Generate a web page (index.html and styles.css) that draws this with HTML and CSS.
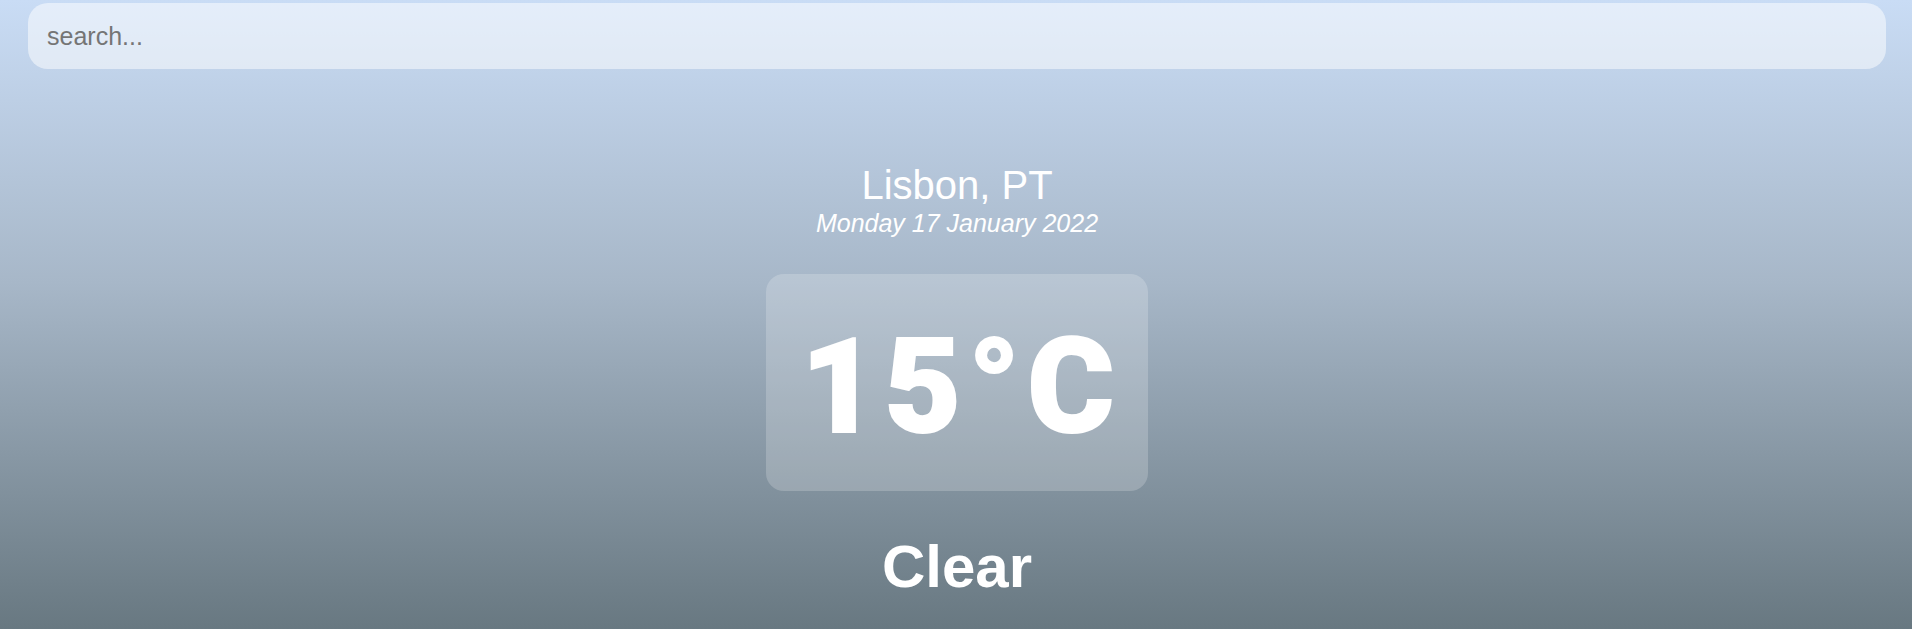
FILE: index.html
```html
<!DOCTYPE html>
<html lang="en">
<head>
<meta charset="utf-8">
<title>Weather</title>
<link rel="stylesheet" href="styles.css">
</head>
<body>
<main class="app">
  <div class="search-box">
    <input class="search-bar" type="text" placeholder="search...">
  </div>
  <section class="location-box">
    <div class="location">Lisbon, PT</div>
    <div class="date">Monday 17 January 2022</div>
  </section>
  <section class="weather-box">
    <div class="temp">15°C</div>
    <div class="weather">Clear</div>
  </section>
</main>
</body>
</html>
```
FILE: styles.css
```css
* { box-sizing: border-box; }
html, body { margin: 0; padding: 0; height: 100%; }
body {
  font-family: "Liberation Sans", Arial, sans-serif;
  background: linear-gradient(to bottom, #c9dcf5 0%, #a7b7c8 45%, #687881 100%);
  overflow: hidden;
}
.app {
  height: 629px;
  padding: 3px 26px 0 28px;
  display: flex;
  flex-direction: column;
}
.search-box { width: 100%; }
.search-bar {
  display: block;
  width: 100%;
  height: 66px;
  padding: 0 19px;
  border: none;
  outline: none;
  border-radius: 20px;
  background-color: rgba(255, 255, 255, 0.5);
  font-family: "Liberation Sans", Arial, sans-serif;
  font-size: 25px;
  color: #313131;
}
.search-bar::placeholder { color: #757575; }
.location-box {
  margin-top: 93px;
  text-align: center;
  color: #fff;
}
.location {
  font-size: 40px;
  line-height: 46px;
}
.date {
  margin-top: 1px;
  font-size: 25px;
  line-height: 28px;
  font-style: italic;
}
.weather-box {
  text-align: center;
  color: #fff;
}
.temp {
  display: inline-block;
  margin-top: 37px;
  padding: 37px 27px 28px 35px;
  border-radius: 18px;
  background-color: rgba(255, 255, 255, 0.2);
  font-family: Roboto, "Liberation Sans", sans-serif;
  font-size: 132px;
  line-height: 152px;
  font-weight: 900;
  letter-spacing: 7px;
  -webkit-text-stroke: 2px #fff;
}
.weather {
  margin-top: 41px;
  font-size: 60px;
  line-height: 69px;
  font-weight: 700;
}
```
